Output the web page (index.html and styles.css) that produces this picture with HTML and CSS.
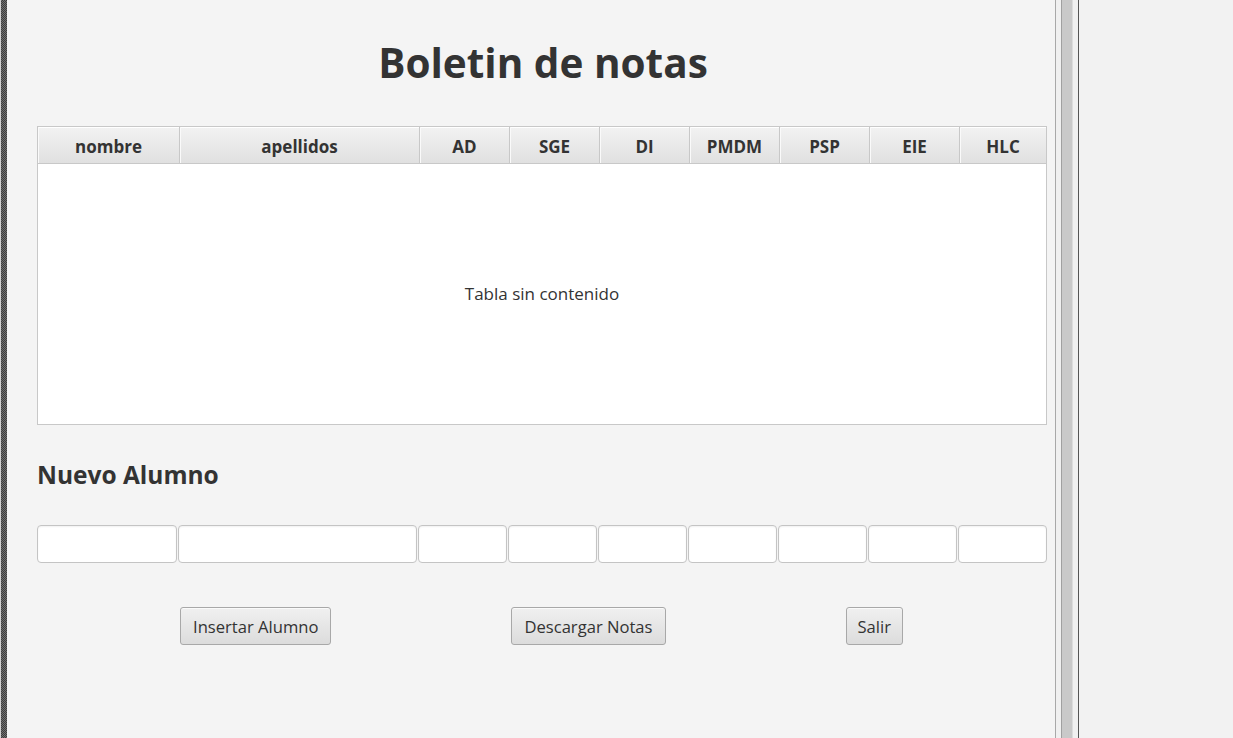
FILE: index.html
```html
<!DOCTYPE html>
<html lang="es">
<head>
<meta charset="utf-8">
<title>Boletin de notas</title>
<link rel="stylesheet" href="styles.css">
</head>
<body>
<div class="window">
  <div class="edge"></div>
  <main class="panel">
    <h1 class="title">Boletin de notas</h1>
    <div class="table">
      <div class="thead">
        <div class="th c-nombre">nombre</div>
        <div class="th c-apellidos">apellidos</div>
        <div class="th c-n">AD</div>
        <div class="th c-n">SGE</div>
        <div class="th c-n">DI</div>
        <div class="th c-n">PMDM</div>
        <div class="th c-n">PSP</div>
        <div class="th c-n">EIE</div>
        <div class="th c-last">HLC</div>
      </div>
      <div class="tbody">Tabla sin contenido</div>
    </div>
    <h2 class="subtitle">Nuevo Alumno</h2>
    <div class="inputs">
      <input class="field f-nombre" type="text">
      <input class="field f-apellidos" type="text">
      <input class="field f-n" type="text">
      <input class="field f-n" type="text">
      <input class="field f-n" type="text">
      <input class="field f-n" type="text">
      <input class="field f-n" type="text">
      <input class="field f-n" type="text">
      <input class="field f-last" type="text">
    </div>
    <div class="buttons">
      <button class="btn">Insertar Alumno</button>
      <button class="btn">Descargar Notas</button>
      <button class="btn btn-small">Salir</button>
    </div>
  </main>
  <div class="divider">
    <div class="d1"></div>
    <div class="d2"></div>
    <div class="d3"></div>
    <div class="d4"></div>
    <div class="d5"></div>
  </div>
  <div class="right"></div>
</div>
</body>
</html>
```

FILE: styles.css
```css
* { box-sizing: border-box; }
html, body { margin: 0; padding: 0; }
body {
  background: #f2f2f2;
  font-family: "Open Sans", "Noto Sans", sans-serif;
  color: #333;
}
.window {
  display: flex;
  height: 738px;
  overflow: hidden;
}
.edge {
  width: 7px;
  flex: none;
  border-left: 1px solid #d0d0d0;
  background: repeating-conic-gradient(#3c3c3c 0 25%, #707070 0 50%) 0 0 / 2px 2px;
}
.panel {
  width: 1048px;
  flex: none;
  background: #f4f4f4;
  padding-left: 30px;
}
.title {
  margin: 0;
  width: 1010px;
  height: 126px;
  display: flex;
  align-items: center;
  justify-content: center;
  font-size: 40.5px;
  font-weight: 700;
  color: #333;
  padding-bottom: 2px;
  padding-left: 2px;
}
.table {
  width: 1010px;
  height: 299px;
  border: 1px solid #c8c8c8;
  background: #fff;
  display: flex;
  flex-direction: column;
}
.thead {
  display: flex;
  height: 37px;
  flex: none;
  background: linear-gradient(#f2f2f2, #e0e0e0);
  border-bottom: 1px solid #c8c8c8;
  box-shadow: inset 0 1px 0 #fff;
}
.th {
  display: flex;
  align-items: center;
  justify-content: center;
  padding-top: 2px;
  font-size: 17px;
  font-weight: 700;
  color: #333;
  border-right: 1px solid #c8c8c8;
  box-shadow: inset 1px 0 0 #fafafa;
}
.c-nombre { width: 142px; }
.c-apellidos { width: 240px; }
.c-n { width: 90px; }
.c-last { flex: 1; border-right: none; }
.tbody {
  flex: 1;
  display: flex;
  align-items: center;
  justify-content: center;
  font-size: 17px;
  color: #333;
  padding-bottom: 1px;
}
.subtitle {
  margin: 0;
  height: 100px;
  padding-top: 34px;
  font-size: 24.5px;
  font-weight: 700;
  color: #333;
  line-height: 32px;
}
.inputs {
  display: flex;
  width: 1010px;
  gap: 1px;
}
.field {
  flex: none;
  min-width: 0;
  height: 38px;
  margin: 0;
  padding: 0 6px;
  border: 1px solid #c4c4c4;
  border-radius: 4px;
  background: #fff;
  box-shadow: inset 0 1px 2px rgba(0,0,0,0.06);
  outline: none;
  font: inherit;
}
.f-nombre { width: 140px; }
.f-apellidos { width: 239px; }
.f-n { width: 89px; }
.f-last { flex: 1 1 0; }
.buttons {
  display: flex;
  gap: 180px;
  padding-left: 143px;
  margin-top: 44px;
}
.btn {
  height: 38px;
  margin: 0;
  padding: 0 12px;
  font-family: inherit;
  font-size: 16.6px;
  color: #333;
  border: 1px solid #a8a8a8;
  border-radius: 3px;
  background: linear-gradient(#f0f0f0, #dcdcdc);
  box-shadow: inset 0 1px 0 #fafafa;
}
.btn-small { padding: 0 11px; }
.divider {
  display: flex;
  flex: none;
  height: 100%;
}
.d1 { width: 1px; background: #a8a8a8; }
.d2 { width: 5px; background: #f0f0f0; }
.d3 { width: 1px; background: #a0a0a0; }
.d4 { width: 11px; background: #c9c9c9; border-right: 1px solid #dcdcdc; }
.d5 { width: 6px; background: #f0f0f0; border-right: 1px solid #555; }
.right { flex: 1; background: #f2f2f2; }
```
